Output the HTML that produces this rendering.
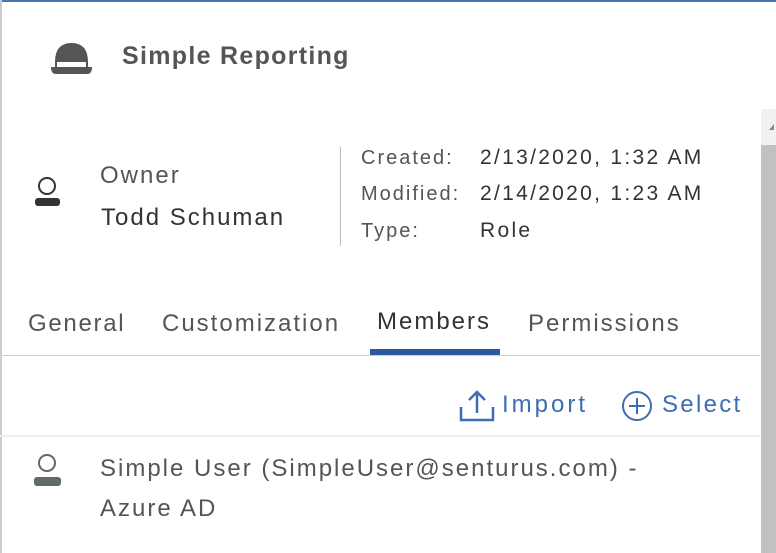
<!DOCTYPE html>
<html><head><style>
body{margin:0;width:776px;height:553px;overflow:hidden;background:#fff;font-family:"Liberation Sans",sans-serif;position:relative}
.a{position:absolute;white-space:nowrap}
.g{color:#555;font-size:24px;letter-spacing:2px}
.m{font-size:20px;color:#444;letter-spacing:2px}
.t{font-size:24px;color:#555;letter-spacing:2px}
.b{color:#3d6db3;font-size:24px;letter-spacing:2.3px}
</style></head><body>
<div class="a" style="left:0;top:0;width:776px;height:2px;background:#4a76b0"></div>
<div class="a" style="left:0;top:0;width:2px;height:553px;background:#ccc"></div>
<svg class="a" style="left:50px;top:42px" width="43" height="34" viewBox="0 0 43 34">
<path d="M5 20 Q5 1 21.5 1 Q38 1 38 20 Z" fill="#555"/>
<rect x="5" y="19" width="2" height="7" fill="#555"/>
<rect x="36" y="19" width="2" height="7" fill="#555"/>
<path d="M1 25 H42 Q42 32 37 32 H6 Q1 32 1 25Z" fill="#555"/>
</svg>
<div class="a" style="left:122px;top:42px;font-size:25px;font-weight:bold;color:#555;letter-spacing:1.3px">Simple Reporting</div>
<svg class="a" style="left:34px;top:176px" width="28" height="32" viewBox="0 0 28 32">
<circle cx="13" cy="10" r="8" fill="none" stroke="#333" stroke-width="2"/>
<rect x="1" y="22" width="25" height="8" rx="3" fill="#333"/>
</svg>
<div class="a g" style="left:100px;top:162px">Owner</div>
<div class="a g" style="left:101px;top:204px;color:#333">Todd Schuman</div>
<div class="a" style="left:340px;top:147px;width:1px;height:99px;background:#bbb"></div>
<div class="a m" style="left:361px;top:147px;color:#555">Created:</div>
<div class="a m" style="left:361px;top:183px;color:#555">Modified:</div>
<div class="a m" style="left:361px;top:220px;color:#555">Type:</div>
<div class="a m" style="left:480px;top:146px;color:#333;font-size:21px;letter-spacing:2.3px">2/13/2020, 1:32 AM</div>
<div class="a m" style="left:480px;top:182px;color:#333;font-size:21px;letter-spacing:2.3px">2/14/2020, 1:23 AM</div>
<div class="a m" style="left:480px;top:219px;color:#333;font-size:21px;letter-spacing:2.3px">Role</div>
<div class="a t" style="left:28px;top:310px;letter-spacing:1.7px">General</div>
<div class="a t" style="left:162px;top:310px">Customization</div>
<div class="a t" style="left:377px;top:308px;color:#333">Members</div>
<div class="a t" style="left:528px;top:310px">Permissions</div>
<div class="a" style="left:0;top:355px;width:760px;height:1px;background:#ccc"></div>
<div class="a" style="left:370px;top:349px;width:130px;height:6px;background:#2a579e"></div>
<svg class="a" style="left:459px;top:389px" width="36" height="34" viewBox="0 0 36 34">
<path d="M2 18 V31 H34 V18 M18 24 V3 M10 11 L18 3 L26 11" fill="none" stroke="#3d6db3" stroke-width="2.5"/>
</svg>
<div class="a b" style="left:502px;top:391px;letter-spacing:3px">Import</div>
<svg class="a" style="left:621px;top:390px" width="34" height="34" viewBox="0 0 34 34">
<circle cx="16" cy="16" r="14" fill="none" stroke="#3d6db3" stroke-width="2"/>
<path d="M16 8 V24 M8 16 H24" stroke="#3d6db3" stroke-width="2"/>
</svg>
<div class="a b" style="left:662px;top:391px">Select</div>
<div class="a" style="left:0;top:435px;width:760px;height:2px;background:#eee"></div>
<svg class="a" style="left:32px;top:452px" width="30" height="36" viewBox="0 0 30 36">
<circle cx="15" cy="11" r="8" fill="none" stroke="#666" stroke-width="2"/>
<rect x="2" y="25" width="27" height="9" rx="3" fill="#5f6a6a"/>
</svg>
<div class="a g" style="left:100px;top:455px">Simple User (SimpleUser@senturus.com) -</div>
<div class="a g" style="left:100px;top:495px">Azure AD</div>
<div class="a" style="left:761px;top:109px;width:15px;height:444px;background:#c1c1c1"></div>
<div class="a" style="left:761px;top:109px;width:15px;height:36px;background:#f1f1f1"></div>
<div class="a" style="left:769px;top:124px;width:0;height:0;border-left:5px solid transparent;border-bottom:6px solid #888"></div>
</body></html>
